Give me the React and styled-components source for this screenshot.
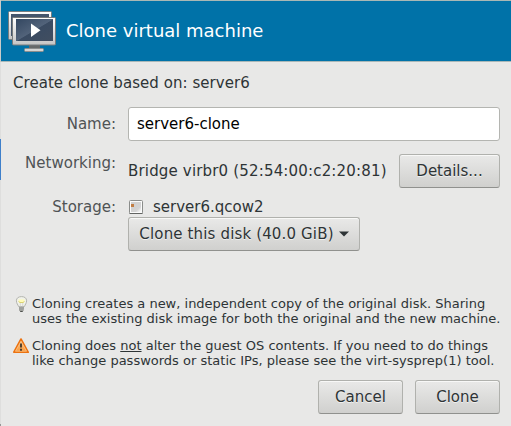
import React from "react";
import styled, { createGlobalStyle } from "styled-components";

const GlobalStyle = createGlobalStyle`
  * { box-sizing: border-box; }
  body { margin: 0; background: #e8e8e7; overflow: hidden; }
`;

const Frame = styled.div`
  display: flex;
  width: 511px;
  height: 426px;
  font-family: "DejaVu Sans", sans-serif;
  font-size: 15px;
  color: #2e3436;
  white-space: nowrap;
`;

const Edge = styled.div`
  flex: 0 0 1px;
  background: linear-gradient(
    #c9cbc9 0 62px,
    #dededd 62px 139px,
    #3e7fca 139px 180px,
    #dededd 180px 424px,
    #969696 424px
  );
`;

const Dialog = styled.main`
  flex: 1;
  display: flex;
  flex-direction: column;
  background: #e8e8e7;
`;

const Header = styled.header`
  display: flex;
  align-items: center;
  height: 62px;
  padding-left: 7px;
  gap: 9px;
  background: #0072a8;
  border-top: 1px solid #a9b8b5;
  border-bottom: 1px solid #a9b8b8;
`;

const Title = styled.h1`
  margin: 0;
  padding-bottom: 2px;
  font-size: 18px;
  font-weight: 400;
  color: #fff;
`;

const Intro = styled.p`
  margin: 12px 0 0 12px;
  height: 18px;
  line-height: 18px;
  letter-spacing: 0.05px;
`;

const Form = styled.section`
  display: grid;
  grid-template-columns: 103px 372px;
  column-gap: 12px;
  row-gap: 13px;
  margin: 15px 0 0 12px;
`;

const Label = styled.label`
  justify-self: end;
  height: 18px;
  line-height: 18px;
  margin-top: ${(p) => p.$top || 0}px;
  color: #4f5355;
`;

const NameInput = styled.input`
  width: 372px;
  height: 34px;
  padding: 0 8px 1px;
  border: 1px solid #b4b5b1;
  border-radius: 3px;
  outline: none;
  background: #fff;
  color: #000;
  font: inherit;
  letter-spacing: 0;
`;

const NetworkRow = styled.div`
  display: flex;
  align-items: center;
  justify-content: space-between;
`;

const Address = styled.span`
  padding-bottom: 1px;
  letter-spacing: 0.17px;
`;

const Button = styled.button`
  display: flex;
  align-items: center;
  justify-content: center;
  gap: 5px;
  width: ${(p) => p.$width}px;
  height: 34px;
  padding: 0;
  border: 1px solid #b0b1ad;
  border-bottom-color: #90918e;
  border-radius: 3px;
  background: linear-gradient(#e9e9e8, #d0d0ce);
  box-shadow: inset 0 1px #f8f8f7;
  color: #2e3436;
  font: inherit;
  line-height: 18px;
  letter-spacing: ${(p) => p.$tracking || 0}px;
  text-shadow: 0 1px #f0f0ef;
`;

const Storage = styled.div`
  display: flex;
  flex-direction: column;
`;

const Disk = styled.div`
  display: flex;
  align-items: center;
  height: 16px;
  gap: 9px;
  margin: -2px 0 2px;
`;

const Notes = styled.section`
  display: flex;
  flex-direction: column;
  gap: 12px;
  margin: 45px 0 0 12px;
`;

const Note = styled.div`
  display: flex;
  gap: 3px;
  height: 30px;
  font-size: 13px;
  line-height: 15px;
`;

const NoteText = styled.p`
  margin: 0;
`;

const Actions = styled.footer`
  display: flex;
  justify-content: flex-end;
  gap: 12px;
  margin: 12px 11px 0 0;
`;

function MachineIcon() {
  return (
    <svg width="49" height="42" viewBox="0 0 49 42">
      <defs>
        <linearGradient id="screen" x2="1" y2="1">
          <stop stopColor="#334761" />
          <stop offset=".5" stopColor="#52637a" />
          <stop offset=".52" stopColor="#3a4b62" />
          <stop offset="1" stopColor="#414e60" />
        </linearGradient>
        <linearGradient id="bezel" x2="0" y2="1">
          <stop stopColor="#fff" />
          <stop offset="1" stopColor="#c4c4c4" />
        </linearGradient>
      </defs>
      <rect x=".5" y="1.5" width="43" height="28" rx="1" fill="url(#bezel)" stroke="#777d80" />
      <rect x="3" y="4" width="38" height="22" fill="#44556c" />
      <rect x="16.5" y="38.500" width="19" height="3" rx="1" fill="#d5d5d4" stroke="#8b8d8d" />
      <path d="M21 35h11v3H21z" fill="#66696a" />
      <rect x="4.500" y="7.500" width="43" height="27.500" rx="1" fill="url(#bezel)" stroke="#777b7c" />
      <rect x="8" y="9" width="37" height="22" fill="url(#screen)" />
      <path d="M23 13.500v13.500l9.500-6.700z" fill="#fff" />
    </svg>
  );
}

function DiskIcon() {
  return (
    <svg width="16" height="16" viewBox="0 0 16 16">
      <defs>
        <linearGradient id="case" x2="1" y2="1">
          <stop stopColor="#cfcfcf" />
          <stop offset=".7" stopColor="#d4d4d4" />
          <stop offset="1" stopColor="#fff" />
        </linearGradient>
      </defs>
      <rect x="1.500" y="1.500" width="13" height="13" rx="1" fill="#fafafa" stroke="#8a8c8a" />
      <path d="M1.500 14.500h13" stroke="#626462" />
      <path d="M3 3h10v10H3z" fill="url(#case)" />
      <path d="M3 5h3v3H3z" fill="#c17d44" />
    </svg>
  );
}

function BulbIcon() {
  return (
    <svg width="16" height="16" viewBox="0 0 16 16">
      <path d="M5.500 10.500C5 8.500 3.400 7.500 3.400 4.800 3.400 2 5.500.6 8.500.6s5.100 1.400 5.100 4.200c0 2.700-1.600 3.700-2.100 5.700z" fill="#f1f2ea" stroke="#b3b4af" />
      <path d="M5.500 3.500h6l-.5 3H6z" fill="#fffbb8" />
      <path d="M5.500 5.500 7 6.500h3l1.500-1" fill="none" stroke="#d6cc66" strokeWidth=".9" />
      <path d="M7.300 7v4M9.700 7v4" fill="none" stroke="#cfd0c8" strokeWidth=".7" />
      <path d="M6 10.500h5v3.500L9.500 16h-2L6 14z" fill="#b5b6b3" />
      <path d="M6 12h5M6 14h4.500" stroke="#81837e" strokeWidth=".8" />
      <path d="M7.200 15.500h2.500" stroke="#4e504d" />
    </svg>
  );
}

function WarningIcon() {
  return (
    <svg width="16" height="16" viewBox="0 0 16 16">
      <defs>
        <linearGradient id="amber" x2="0" y2="1">
          <stop stopColor="#fbc48b" />
          <stop offset="1" stopColor="#f99a3c" />
        </linearGradient>
      </defs>
      <path d="M8 1 15.200 14.200H.8z" fill="url(#amber)" stroke="#ec7210" strokeWidth="1.600" strokeLinejoin="round" />
      <path d="M8 3.300 13.500 13.200h-11z" fill="none" stroke="#fbc890" strokeWidth=".7" />
      <path d="M8 5.500v4M8 10.800v2" stroke="#36302a" strokeWidth="1.700" />
    </svg>
  );
}

function DropdownArrow() {
  return (
    <svg width="10" height="6" viewBox="0 0 10 6">
      <path d="M0 .5h10L5 5.500z" fill="#2e3436" />
    </svg>
  );
}

export default function App() {
  return (
    <Frame>
      <GlobalStyle />
      <Edge />
      <Dialog>
        <Header>
          <MachineIcon />
          <Title>Clone virtual machine</Title>
        </Header>
        <Intro>Create clone based on: server6</Intro>
        <Form>
          <Label htmlFor="name" $top={8}>Name:</Label>
          <NameInput id="name" defaultValue="server6-clone" />
          <Label as="span">Networking:</Label>
          <NetworkRow>
            <Address>Bridge virbr0 (52:54:00:c2:20:81)</Address>
            <Button $width={101}>Details...</Button>
          </NetworkRow>
          <Label as="span" $top={-3}>Storage:</Label>
          <Storage>
            <Disk>
              <DiskIcon />
              <span>server6.qcow2</span>
            </Disk>
            <Button $width={232} $tracking={0.15}>
              Clone this disk (40.0 GiB)
              <DropdownArrow />
            </Button>
          </Storage>
        </Form>
        <Notes>
          <Note>
            <BulbIcon />
            <NoteText>
              Cloning creates a new, independent copy of the original disk. Sharing
              <br />
              uses the existing disk image for both the original and the new machine.
            </NoteText>
          </Note>
          <Note>
            <WarningIcon />
            <NoteText>
              Cloning does <u>not</u> alter the guest OS contents. If you need to do things
              <br />
              like change passwords or static IPs, please see the virt-sysprep(1) tool.
            </NoteText>
          </Note>
        </Notes>
        <Actions>
          <Button $width={85}>Cancel</Button>
          <Button $width={85}>Clone</Button>
        </Actions>
      </Dialog>
    </Frame>
  );
}
